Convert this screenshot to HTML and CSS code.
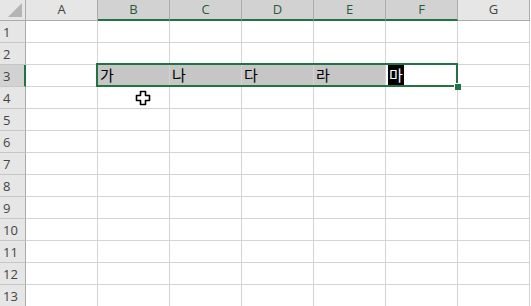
FILE: index.html
```html
<!DOCTYPE html>
<html lang="ko">
<head>
  <meta charset="UTF-8">
  <title>Sheet1</title>
  <link rel="stylesheet" href="styles.css">
</head>
<body>
  <div class="sheet">
    <div class="grid" id="grid">
      <div class="corner"><span class="tri"></span></div>
      <div class="colhead">A</div>
      <div class="colhead sel">B</div>
      <div class="colhead sel">C</div>
      <div class="colhead sel">D</div>
      <div class="colhead sel">E</div>
      <div class="colhead sel">F</div>
      <div class="colhead">G</div>
    </div>

    <!-- selection box B3:F3 -->
    <div class="selection"><span class="handle"></span></div>

    <!-- mouse cursor -->
    <svg class="cursor" width="16" height="16" viewBox="0 0 16 16">
      <path d="M5.5 1.5h5v4h4v5h-4v4h-5v-4h-4v-5h4z" fill="#fff" stroke="#000" stroke-width="1.6" stroke-linejoin="round"/>
    </svg>
  </div>

  <script>
    // build rows 1..13
    const grid = document.getElementById('grid');
    const row3 = ['', '가', '나', '다', '라', '마', ''];
    for (let r = 1; r <= 13; r++) {
      const head = document.createElement('div');
      head.className = 'rowhead' + (r === 3 ? ' sel' : '');
      head.textContent = r;
      grid.appendChild(head);
      for (let c = 0; c < 7; c++) {
        const cell = document.createElement('div');
        cell.className = 'cell';
        if (r === 3) {
          if (c >= 1 && c <= 4) cell.classList.add('shade');
          if (c === 5) {
            cell.innerHTML = '<span class="ime">' + row3[c] + '</span>';
          } else {
            cell.textContent = row3[c];
          }
        }
        grid.appendChild(cell);
      }
    }
  </script>
</body>
</html>
```

FILE: styles.css
```css
* {
  box-sizing: border-box;
}
body {
  margin: 0;
  background: #fff;
  overflow: hidden;
}
.sheet {
  position: relative;
  width: 531px;
  height: 306px;
  overflow: hidden;
}
.grid {
  display: grid;
  grid-template-columns: 26px repeat(7, 72px);
  grid-template-rows: 21px;
  grid-auto-rows: 22px;
}
.corner {
  position: relative;
  background: #e6e6e6;
  border-right: 1px solid #ababab;
  border-bottom: 1px solid #ababab;
}
.tri {
  position: absolute;
  right: 3px;
  bottom: 3px;
  width: 0;
  height: 0;
  border-left: 14px solid transparent;
  border-bottom: 14px solid #b4b4b4;
}
.colhead {
  background: #e6e6e6;
  border-right: 1px solid #ababab;
  border-bottom: 1px solid #ababab;
  font: 13px "Open Sans", "Liberation Sans", sans-serif;
  color: #444;
  text-align: center;
  line-height: 19px;
}
.colhead.sel {
  background: #d2d2d2;
  border-bottom: 2px solid #217346;
  color: #2a5a3c;
  line-height: 18px;
}
.rowhead {
  background: #e6e6e6;
  border-right: 1px solid #ababab;
  border-bottom: 1px solid #c6c6c6;
  font: 13px "Open Sans", "Liberation Sans", sans-serif;
  color: #444;
  padding-left: 3px;
  line-height: 22px;
}
.rowhead.sel {
  background: #d2d2d2;
  border-right: 2px solid #217346;
}
.cell {
  border-right: 1px solid #d4d4d4;
  border-bottom: 1px solid #d4d4d4;
  font: 15px "Noto Sans CJK KR", sans-serif;
  color: #000;
  padding-left: 2px;
  line-height: 20px;
}
.cell.shade {
  background: #c6c6c6;
}
.ime {
  display: inline-block;
  background: #000;
  color: #fff;
  padding: 0 1px;
  height: 20px;
  line-height: 20px;
}
.selection {
  position: absolute;
  left: 96px;
  top: 63px;
  width: 362px;
  height: 24px;
  border: 2px solid #217346;
  pointer-events: none;
}
.handle {
  position: absolute;
  right: -5px;
  bottom: -5px;
  width: 7px;
  height: 7px;
  background: #217346;
  border-left: 1px solid #fff;
  border-top: 1px solid #fff;
}
.cursor {
  position: absolute;
  left: 135px;
  top: 90px;
}
```
